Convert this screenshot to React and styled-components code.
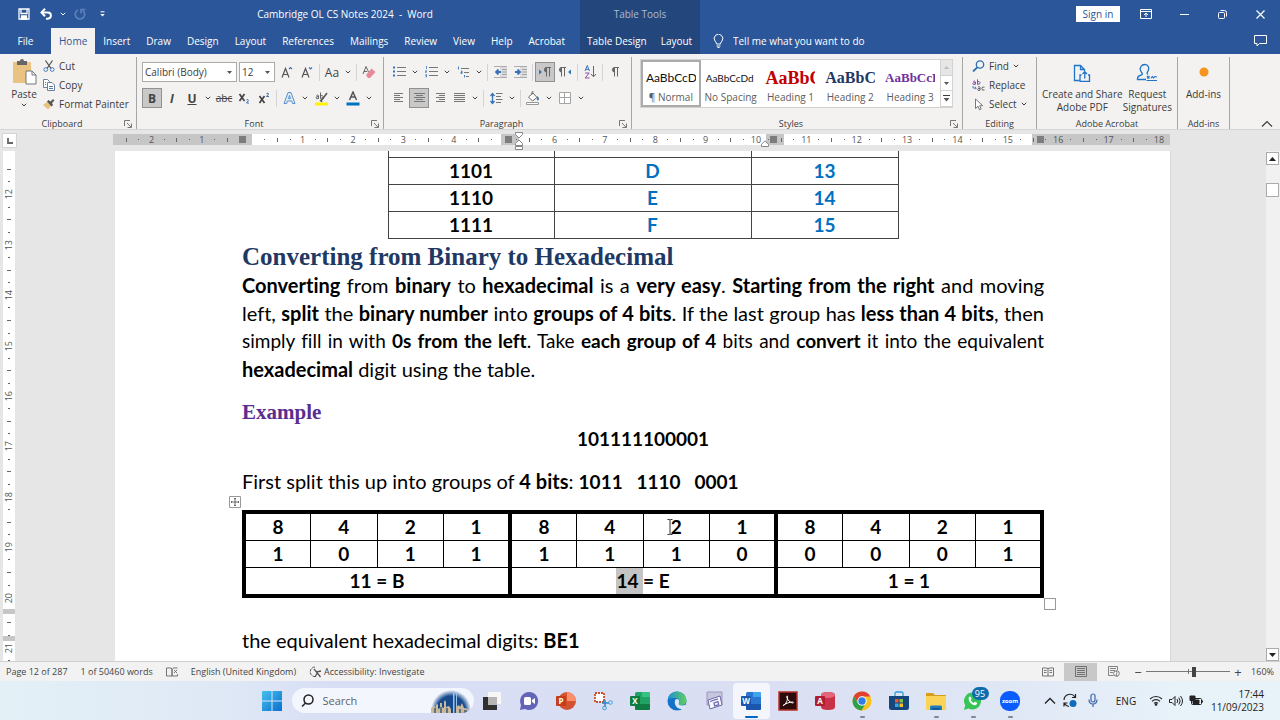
import React from "react";
import styled, { createGlobalStyle, css } from "styled-components";

const UI_FONT = `"Open Sans", "Noto Sans", sans-serif`;
const DOC_FONT = `Lato, "Open Sans", sans-serif`;
const SERIF_FONT = `"Liberation Serif", serif`;

const GlobalStyle = createGlobalStyle`
  * {
    box-sizing: border-box;
  }

  body {
    margin: 0;
    overflow: hidden;
    font-family: ${UI_FONT};
    font-size: 10px;
    color: #3b3b3b;
  }

  button, input, select {
    font: inherit;
    color: inherit;
    margin: 0;
    padding: 0;
    border: 0;
    background: none;
    outline: none;
  }

  svg {
    display: block;
    flex: none;
  }
`;

const Window = styled.div`
  display: flex;
  flex-direction: column;
  height: 100vh;
  background: #e6e6e6;
`;

/* ---------- Title bar and tabs ---------- */

const Header = styled.header`
  display: flex;
  height: 54px;
  background: #2b579a;
  color: #fff;
`;

const HeaderMain = styled.div`
  flex: 0 0 580px;
  min-width: 0;
`;

const HeaderContext = styled.div`
  flex: 0 0 120px;
  background: #23477d;
`;

const HeaderEnd = styled.div`
  flex: 1;
`;

const TitleRow = styled.div`
  display: flex;
  align-items: center;
  height: 28px;
`;

const TabRow = styled.nav`
  display: flex;
  height: 26px;
`;

const QuickAccess = styled.div`
  display: flex;
  align-items: center;
  gap: 6px;
  width: 110px;
  padding-left: 16px;
`;

const IconButton = styled.button`
  display: flex;
  align-items: center;
  justify-content: center;
  min-width: ${(p) => p.$w || 16}px;
  height: 20px;
`;

const DocTitle = styled.div`
  flex: 1;
  text-align: center;
  white-space: pre;
`;

const ContextTitle = styled.div`
  flex: 1;
  text-align: center;
  color: #a9bad6;
`;

const Tab = styled.button`
  height: 26px;
  padding: 0 ${(p) => p.$pad || 8}px;
  white-space: nowrap;
  ${(p) =>
    p.$active &&
    css`
      background: #f3f2f1;
      color: #2b579a;
    `}
`;

const FileTab = styled(Tab)`
  width: 51px;
`;

const WindowButtons = styled.div`
  display: flex;
  align-items: center;
  justify-content: flex-end;
  width: 100%;
  gap: 14px;
  padding-right: 8px;
`;

const SignIn = styled.button`
  width: 44px;
  height: 16px;
  background: #fff;
  color: #2b579a;
`;

const TellMe = styled.div`
  display: flex;
  flex: 1;
  align-items: center;
  gap: 9px;
  padding: 0 12px 0 13px;

  input {
    flex: 1;
    height: 20px;
  }

  input::placeholder {
    color: #fff;
    opacity: 1;
  }
`;

/* ---------- Ribbon ---------- */

const Ribbon = styled.div`
  display: flex;
  height: 76px;
  padding-top: 3px;
  background: #f3f2f1;
  border-bottom: 1px solid #d5d5d5;
`;

const Group = styled.section`
  display: flex;
  flex-direction: column;
  flex: 0 0 ${(p) => p.$w}px;
  min-width: 0;
  height: 72px;
  border-right: 1px solid #a6a6a6;
`;

const GroupBody = styled.div`
  display: flex;
  flex: 1;
  padding: 0 ${(p) => p.$pad || 5}px;
`;

const GroupFooter = styled.div`
  display: flex;
  align-items: center;
  height: 10px;
  font-size: 9px;
  line-height: 12px;

  span {
    flex: 1;
    text-align: center;
  }

  button {
    width: 12px;
  }
`;

const Rows = styled.div`
  display: flex;
  flex-direction: column;
  gap: 6px;
  padding-top: 5px;
`;

const ToolRow = styled.div`
  display: flex;
  align-items: center;
  height: 20px;
`;

const Tool = styled.button`
  display: flex;
  flex: none;
  align-items: center;
  justify-content: center;
  width: ${(p) => (p.$narrow ? 12 : 20)}px;
  height: 20px;
  border: 1px solid ${(p) => (p.$on ? "#919191" : "transparent")};
  background: ${(p) => (p.$on ? "#c8c8c8" : "none")};
  font-size: 12px;
  color: #444;
`;

const Divider = styled.span`
  flex: none;
  width: 1px;
  height: 17px;
  margin: 0 2px;
  background: #d4d4d4;
`;

const SelectBox = styled.div`
  position: relative;
  flex: none;
  width: ${(p) => p.$w}px;
  height: 20px;
  margin-right: 2px;
  border: 1px solid #ababab;
  background: #fff;

  select {
    width: 100%;
    height: 18px;
    padding-left: 2px;
    appearance: none;
  }

  svg {
    position: absolute;
    right: 4px;
    top: 8px;
    pointer-events: none;
  }
`;

const PasteButton = styled.button`
  display: flex;
  flex-direction: column;
  align-items: center;
  justify-content: flex-start;
  width: 38px;
  gap: 2px;
  padding-top: 2px;
`;

const SmallList = styled.div`
  display: flex;
  flex-direction: column;
  gap: 1px;
`;

const SmallButton = styled.button`
  display: flex;
  align-items: center;
  gap: 4px;
  height: 18px;
  white-space: nowrap;
`;

const BigButton = styled.button`
  display: flex;
  flex-direction: column;
  align-items: center;
  justify-content: flex-start;
  gap: 5px;
  flex: 1 1 auto;
  padding-top: 6px;
  line-height: 13px;
  white-space: pre;
`;

const Gallery = styled.div`
  display: flex;
  width: 313px;
  height: 49px;
  margin-top: 2px;
  border: 1px solid #d2d2d2;
  background: #fff;
`;

const StyleCard = styled.button`
  display: flex;
  flex-direction: column;
  align-items: center;
  justify-content: flex-end;
  flex: 1;
  min-width: 0;
  padding-bottom: 1px;
  overflow: hidden;
  border: 2px solid ${(p) => (p.$on ? "#ababab" : "transparent")};
  color: #5c5c5c;
`;

const Sample = styled.span`
  width: 50px;
  height: 21px;
  overflow: hidden;
  line-height: 18px;
  white-space: nowrap;
  text-align: left;
  font-family: ${(p) => (p.$serif ? SERIF_FONT : DOC_FONT)};
  font-weight: ${(p) => (p.$serif ? 700 : 400)};
  font-size: ${(p) => p.$size}px;
  color: ${(p) => p.$color};
`;

const GalleryNav = styled.div`
  display: flex;
  flex-direction: column;
  width: 12px;
  border-left: 1px solid #d2d2d2;

  button {
    display: flex;
    flex: 1;
    align-items: center;
    justify-content: center;
    border-bottom: 1px solid #d2d2d2;
  }

  button:first-child {
    background: #e6e6e6;
  }
`;

const CollapseArea = styled.div`
  display: flex;
  flex: 1;
  align-items: flex-end;
  justify-content: flex-end;
  padding: 0 7px 1px 0;
`;

/* ---------- Rulers ---------- */

const RulerRow = styled.div`
  display: flex;
  height: 21px;
  padding: 4px 110px 6px 0;
`;

const TabStop = styled.button`
  width: 15px;
  height: 15px;
  margin: -1px 96px 0 2px;
  border: 1px solid #d5d5d5;
  background: #fff;
  display: flex;
  align-items: center;
  justify-content: center;
`;

const Ruler = styled.div`
  position: relative;
  flex: 1;
  height: 11px;
  background: linear-gradient(
    to right,
    #c6c6c6 139px,
    #fff 139px 388px,
    #c6c6c6 388px 406px,
    #fff 406px 653px,
    #c6c6c6 653px 671px,
    #fff 671px 919px,
    #c6c6c6 919px
  );
`;

const Scale = styled.div`
  display: flex;
  height: 11px;
  margin: 0 -8px 0 7px;
  font-size: 9px;
  line-height: 11px;
  color: #555;
`;

const ScaleClip = styled.div`
  overflow: hidden;
`;

const Unit = styled.div`
  display: grid;
  flex: 1;
  grid-template-columns: repeat(4, minmax(0, 1fr));
  align-items: center;
  justify-items: center;
`;

const Tick = styled.i`
  width: 1px;
  height: ${(p) => (p.$long ? 4 : 1)}px;
  background: #666;
`;

const Marker = styled.span`
  position: absolute;
  left: ${(p) => p.$x}px;
  top: 2px;
  width: 7px;
  height: 7px;
  background: #7d7d7d;
`;

const Indent = styled.svg`
  position: absolute;
  left: ${(p) => p.$x}px;
  top: ${(p) => p.$y}px;
`;

const Workspace = styled.main`
  display: flex;
  flex: 1;
  min-height: 0;
`;

const SideRuler = styled.div`
  position: relative;
  display: flex;
  width: 12px;
  margin-left: 3px;
  overflow: hidden;
  background: #fff;
`;

const SideScale = styled.div`
  display: flex;
  flex: 1;
  flex-direction: column;
  margin: 12px 0 -6px;
  font-size: 9px;
  line-height: 12px;
  color: #555;
`;

const SideUnit = styled.div`
  display: grid;
  flex: 1;
  grid-template-rows: repeat(4, minmax(0, 1fr));
  align-items: center;
  justify-items: center;

  span {
    writing-mode: vertical-rl;
    transform: rotate(180deg);
  }
`;

const SideTick = styled.i`
  width: ${(p) => (p.$long ? 4 : 2)}px;
  height: 1px;
  background: #666;
`;

const RowMark = styled.span`
  position: absolute;
  left: 0;
  top: ${(p) => p.$y}px;
  width: 12px;
  height: 5px;
  background: #c6c6c6;
`;

/* ---------- Page ---------- */

const Page = styled.article`
  flex: 1;
  margin: 0 95px 0 100px;
  padding: 0 126px 0 127px;
  overflow: hidden;
  background: #fff;
  border-right: 1px solid #d8d8d8;
  font-family: ${DOC_FONT};
  font-size: 20px;
  font-variant-ligatures: none;
  line-height: 28px;
  color: #000;
`;

const HexTable = styled.table`
  width: 510px;
  margin: 0 auto;
  border-collapse: collapse;
  table-layout: fixed;
  font-size: 19px;
  font-weight: 700;
  text-align: center;
  line-height: 26px;

  td {
    height: 27px;
    padding: 0;
    border: 1px solid #444;
  }

  td + td {
    color: #0070c0;
  }

  tr:first-child td {
    height: 6px;
    border-top: 0;
  }
`;

const SectionTitle = styled.h2`
  margin: 3px 0 0;
  font-family: ${SERIF_FONT};
  font-size: 25px;
  line-height: 29px;
  color: #1f3864;
`;

const Line = styled.div`
  font-size: ${(p) => (p.$tight ? 19 : 20)}px;
  white-space: nowrap;
  text-align-last: ${(p) => (p.$last ? "left" : "justify")};
`;

const ExampleTitle = styled.h3`
  margin: 15px 0 0;
  font-family: ${SERIF_FONT};
  font-size: 21px;
  line-height: 28px;
  color: #5b2d90;
`;

const BitString = styled.p`
  margin: 0;
  font-size: 19px;
  font-weight: 700;
  text-align: center;
  line-height: 26px;
`;

const Paragraph = styled.p`
  margin: ${(p) => p.$top}px 0 0;
  white-space: pre;
`;

const Bits = styled.b`
  font-size: 19px;
`;

const TableFrame = styled.div`
  position: relative;
  margin-top: 14px;
`;

const BitTable = styled.table`
  width: 100%;
  border-collapse: collapse;
  table-layout: fixed;
  border: 4px solid #000;
  font-size: 19px;
  font-weight: 700;
  text-align: center;
  line-height: 26px;

  td {
    height: 27px;
    padding: 0;
    border: 1px solid #000;
  }

  td.edge {
    border-right: 4px solid #000;
  }
`;

const Picked = styled.span`
  display: inline-block;
  background: #c4c4c4;
  white-space: pre;
`;

const MoveHandle = styled.svg`
  position: absolute;
  left: -13px;
  top: -14px;
`;

const ResizeHandle = styled.span`
  position: absolute;
  right: -12px;
  bottom: -12px;
  width: 12px;
  height: 12px;
  border: 1px solid #999;
  background: #fff;
`;

const Caret = styled.svg`
  position: absolute;
  left: 53%;
  top: 9px;
`;

const ScrollBar = styled.div`
  display: flex;
  flex-direction: column;
  width: 14px;
  padding: 1px 1px 0 0;
  background: #f1f1f1;
`;

const ScrollButton = styled.button`
  display: flex;
  align-items: center;
  justify-content: center;
  height: 13px;
  border: 1px solid #ababab;
  background: #fff;
`;

const ScrollThumb = styled.div`
  height: 14px;
  margin: 18px 0 auto;
  border: 1px solid #ababab;
  background: #fff;
`;

/* ---------- Status bar ---------- */

const StatusBar = styled.footer`
  display: flex;
  align-items: center;
  height: 20px;
  padding: 0 6px;
  background: #f2f2f2;
  border-top: 1px solid #cfcfcf;
  font-size: 9px;
  color: #444;
`;

const StatusItem = styled.button`
  display: flex;
  align-items: center;
  gap: 2px;
  margin-right: 13px;
  white-space: nowrap;
`;

const Views = styled.div`
  display: flex;
  margin-left: auto;
`;

const ViewButton = styled.button`
  display: flex;
  align-items: center;
  justify-content: center;
  width: 33px;
  height: 18px;
  background: ${(p) => (p.$on ? "#c8c8c8" : "none")};
`;

const Zoom = styled.input`
  width: 84px;
  height: 12px;
  appearance: none;
  background: linear-gradient(#777, #777) center / 100% 1px no-repeat,
    linear-gradient(#777, #777) center / 1px 5px no-repeat;

  &::-webkit-slider-thumb {
    appearance: none;
    width: 4px;
    height: 10px;
    background: #444;
  }
`;

const ZoomStep = styled.button`
  width: 16px;
  font-size: 13px;
  line-height: 12px;
`;

const ZoomValue = styled.button`
  width: 28px;
  text-align: right;
`;

/* ---------- Taskbar ---------- */

const Taskbar = styled.div`
  display: flex;
  align-items: center;
  height: 39px;
  padding-right: 16px;
  background: linear-gradient(
    to right,
    #e3f0f6 0%,
    #dfe9f6 17%,
    #d8def4 26%,
    #dadff3 60%,
    #dfe7f5 78%,
    #e8f2f9 92%
  );
`;

const Apps = styled.div`
  display: flex;
  flex: none;
  align-items: center;
  margin: 0 auto;
  padding-left: 240px;
`;

const AppButton = styled.button`
  position: relative;
  display: flex;
  align-items: center;
  justify-content: center;
  width: ${(p) => p.$w || 37}px;
  height: 36px;
  border-radius: 4px;
  background: ${(p) => (p.$active ? "rgba(255,255,255,.7)" : "none")};
`;

const Running = styled.i`
  position: absolute;
  bottom: 1px;
  left: 50%;
  width: ${(p) => (p.$active ? 13 : 5)}px;
  height: 2px;
  margin-left: ${(p) => (p.$active ? -6 : -2)}px;
  border-radius: 1px;
  background: ${(p) => (p.$active ? "#0067c0" : "#7f8792")};
`;

const Badge = styled.span`
  position: absolute;
  top: 4px;
  right: 3px;
  width: 17px;
  border-radius: 8px;
  background: #0f6cad;
  color: #fff;
  font-size: 9px;
  line-height: 13px;
  text-align: center;
`;

const SearchBox = styled.div`
  display: flex;
  align-items: center;
  width: 182px;
  height: 25px;
  padding: 0 3px 0 9px;
  gap: 9px;
  overflow: hidden;
  border-radius: 13px;
  background: #f3f6fc;
  font-size: 11px;

  input {
    flex: 1;
    min-width: 0;
  }

  input::placeholder {
    color: #5f6368;
    opacity: 1;
  }
`;

const Tray = styled.div`
  display: flex;
  flex: none;
  align-items: center;
  color: #222;
`;

const TrayButton = styled.button`
  display: flex;
  align-items: center;
  justify-content: center;
  width: ${(p) => p.$w || 20}px;
  height: 24px;
`;

const Clock = styled.button`
  width: 58px;
  line-height: 13px;
  text-align: right;
`;

/* ---------- Icons ---------- */

const Svg = ({ w = 16, h = 16, children, ...rest }) => (
  <svg
    width={w}
    height={h}
    viewBox={`0 0 ${w} ${h}`}
    fill="none"
    stroke="currentColor"
    {...rest}
  >
    {children}
  </svg>
);

const Chevron = () => (
  <Svg w={6} h={4}>
    <path d="M.8.8 3 3 5.2.8" />
  </Svg>
);

const DownArrow = () => (
  <Svg w={5} h={3} stroke="none">
    <path d="M0 0h5L2.500 3z" fill="#555" />
  </Svg>
);

const Launcher = () => (
  <Svg w={8} h={8} stroke="#777">
    <path d="M.5 6V.5H6M3 3l4 4M7.500 3.500v4h-4" />
  </Svg>
);

const SaveIcon = () => (
  <Svg w={12} h={12} strokeWidth="1.3">
    <path d="M1 1h10v10H1zM3 1v4.500h6V1" />
    <path d="M3.500 11V8h5v3z" fill="#fff" />
  </Svg>
);

const UndoIcon = () => (
  <Svg w={13} h={12} strokeWidth="2">
    <path d="M1.500 4.500h6.300a3.100 3.100 0 0 1 0 6.200H6" />
    <path d="M5 .8 1.500 4.500 5 8.200" />
  </Svg>
);

const RedoIcon = () => (
  <Svg w={12} h={12} stroke="#5c80b8" strokeWidth="1.700">
    <path d="M4 2a4.700 4.700 0 1 0 4.600.4" />
    <path d="M7 5.500V1.500h4.500" />
  </Svg>
);

const CustomizeIcon = () => (
  <Svg w={5} h={6}>
    <path d="M.5.8h4" />
    <path d="M.3 3h4.400L2.500 5.500z" fill="#fff" stroke="none" />
  </Svg>
);

const PasteIcon = () => (
  <Svg w={26} h={26} stroke="none">
    <rect x="2" y="3" width="18" height="21" rx="1" fill="#eac282" />
    <path d="M6 2h3a2 2 0 0 1 4 0h3v4H6z" fill="#666" />
    <path d="M15 12h6l4 4v9H15z" fill="#fff" stroke="#777" />
    <path d="M21 12v4h4" stroke="#777" />
  </Svg>
);

const CutIcon = () => (
  <Svg w={12} h={12}>
    <path d="m2.500.5 5.500 8M9.500.5 4 8.500" stroke="#555" strokeWidth="1.300" />
    <circle cx="2.800" cy="9.500" r="1.900" stroke="#4a7ebb" />
    <circle cx="9.200" cy="9.500" r="1.900" stroke="#4a7ebb" />
  </Svg>
);

const CopyIcon = () => (
  <Svg w={12} h={12} stroke="#6b7f99">
    <path d="M.5.5h4l2 2v6h-6z" fill="#fff" />
    <path d="M4.500 3.500h4.500l2.500 2.500v5.500h-7z" fill="#fff" />
    <path d="M6 7.500h4M6 9.500h4M2 3.500h1M2 5.500h1" stroke="#4a7ebb" />
  </Svg>
);

const BrushIcon = () => (
  <Svg w={12} h={12} stroke="none">
    <path d="M0 7 4.500 3.500l4 4L5 11.500z" fill="#eac282" />
    <path d="m4 3.500 1.500-1.500 2 1.500L10 1l1.500 1.500L9 5l1 2-1.500 1.500z" fill="#555" />
  </Svg>
);

const GrowFont = ({ down }) => (
  <Svg w={14} h={14} stroke="#555" strokeWidth="1.200">
    <path d="m2 12.500 3.500-9 3.500 9M3.300 9.500h4.400" />
    <path d={down ? "m9 2.500 1.500 1.500L12 2.500" : "M9 4l1.500-1.500L12 4"} stroke="#3873b8" />
  </Svg>
);

const EraserIcon = () => (
  <Svg w={14} h={14}>
    <path d="m1 9 3-7.500L6.500 7M2 6.500h3" stroke="#666" />
    <path d="m4 10 5.500-6.500L13.500 7 8 13H6z" fill="#e8899a" stroke="none" />
  </Svg>
);

const OutlineA = () => (
  <Svg w={13} h={14} stroke="#5a92cf">
    <path d="M1 12.500 5 1.500h3l4 11H9.500l-.8-2.500H4.500l-.8 2.500z" fill="#dbe9f7" />
    <path d="m5.500 7.500 1-3 1 3z" fill="#fff" />
  </Svg>
);

const HighlightIcon = () => (
  <Svg w={15} h={15} stroke="#555">
    <path d="m7 10 6-8M6 9l2 2" strokeWidth="1.500" />
    <path d="M2.500 4.500q1.500-1 2 0v3q-2.500.8-2.500-.8t2.500-1M6.500 1.500v6M6.500 5q2-1.500 2.500.5t-2.500 2" strokeWidth=".9" />
    <path d="M1 11.500h13v3H1z" fill="#fff100" stroke="none" />
  </Svg>
);

const FontColorIcon = () => (
  <Svg w={14} h={15} stroke="#555" strokeWidth="1.500">
    <path d="m3.500 9 3.500-8 3.500 8M4.800 6h4.400" />
    <path d="M.5 11.500h13v3H.5z" fill="#0070c0" stroke="none" />
  </Svg>
);

const ListIcon = ({ kind }) => (
  <Svg w={13} h={12} stroke="#777">
    <path d={kind === "multi" ? "M4 2.500h8M7 6.500h5M9 10.500h3" : "M4 1.500h9M4 5.500h9M4 9.500h9"} />
    {kind === "bullet" && (
      <path d="M0 1.500h2M0 5.500h2M0 9.500h2" stroke="#3873b8" strokeWidth="2" />
    )}
    {kind === "number" && (
      <path d="M1.500 0v3M.5 4.500h1v1h-1v1h1M.5 8.500h1v2.500h-1M.5 9.500h1" stroke="#3873b8" strokeWidth=".8" />
    )}
    {kind === "multi" && (
      <path d="M1.500.5v3M4 5h1v2.500H4V6h1M7.500 9v2.500" stroke="#3873b8" strokeWidth=".9" />
    )}
  </Svg>
);

const IndentIcon = ({ out }) => (
  <Svg w={13} h={12} stroke="#999">
    <path d="M6 .5h7v11H6z" fill="#dcdcdc" stroke="none" />
    <path d="M0 .5h13M8 3.500h5M8 6h5M8 8.500h5M0 11.500h13" strokeWidth=".8" />
    <path d={out ? "M7 6H2m2.500-2.500L2 6l2.500 2.500" : "M1 6h5M3.500 3.500 6 6 3.500 8.500"} stroke="#3873b8" strokeWidth="1.800" />
  </Svg>
);

const PilcrowIcon = ({ arrow }) => (
  <Svg w={14} h={12} stroke="#666">
    {arrow === "right" && <path d="M1 3.500v5l3-2.500z" fill="#3873b8" stroke="none" />}
    {arrow === "left" && <path d="M13 3.500v5l-3-2.500z" fill="#3873b8" stroke="none" />}
    <g transform={arrow === "right" ? "translate(2 0)" : arrow ? "translate(-3 0)" : "translate(0 0)"}>
      <path d="M6.500 10.500v-9M9.500 10.500v-9M11 1.500H6" />
      <path d="M6.500 1.500a2 2.200 0 0 0 0 4.500z" fill="#666" />
    </g>
  </Svg>
);

const SortIcon = () => (
  <Svg w={13} h={14}>
    <path d="m1 6 2.300-5.500L5.500 6M1.800 4.300h3" stroke="#3873b8" />
    <path d="M1.200 8h4L1.200 13h4.300" stroke="#8a4fa3" />
    <path d="M9.500 1v10.500M7 9l2.500 2.800L12 9" stroke="#666" />
  </Svg>
);

const alignPaths = {
  left: "M0 .5h9M0 2.500h6M0 4.500h9M0 6.500h6M0 8.500h9",
  center: "M0 .5h11M2 2.500h7M0 4.500h11M2 6.500h7M0 8.500h11",
  right: "M2 .5h9M5 2.500h6M2 4.500h9M5 6.500h6M2 8.500h9",
  justify: "M0 .5h11M0 2.500h11M0 4.500h11M0 6.500h11M0 8.500h11",
};

const AlignIcon = ({ kind }) => (
  <Svg w={11} h={10} stroke="#777">
    <path d={alignPaths[kind]} />
  </Svg>
);

const SpacingIcon = () => (
  <Svg w={13} h={13}>
    <path d="M2.500 2v9M.5 4l2-2.500 2 2.500M.5 9l2 2.500 2-2.500" stroke="#3873b8" strokeWidth="1.300" />
    <path d="M6 1.500h6.500M6 4.500h5M6 7.500h6.500M6 10.500h5" stroke="#777" />
  </Svg>
);

const ShadingIcon = () => (
  <Svg w={14} h={14} stroke="#666">
    <path d="m2.500 6 4.500-4 4 4.500-4.500 3.500z" fill="#fff" />
    <path d="M6 3.500V.8h1.500" />
    <path d="M11.500 5q2.500 3 .8 4.200T11 6z" fill="#3873b8" stroke="none" />
    <path d="M.5 11.500h12v2H.5z" fill="#fff" stroke="#999" />
  </Svg>
);

const BordersIcon = () => (
  <Svg w={12} h={12} stroke="#a5a5a5">
    <path d="M.5.5h11v11H.5zM5.500.5v11M.5 5.500h11" fill="#fff" />
  </Svg>
);

const FindIcon = () => (
  <Svg w={13} h={12} stroke="#2f6fad" strokeWidth="1.300">
    <circle cx="8" cy="4.500" r="3.700" />
    <path d="M5.300 7.300 1 11.500" strokeWidth="1.800" />
  </Svg>
);

const ReplaceIcon = () => (
  <Svg w={13} h={12} strokeWidth=".9">
    <path d="M1.200 2.500q1.800-1 2.200.3v2.500q-2.600.8-2.600-.6t2.600-1M5.500.3v5.200M5.500 3q2-1.300 2.500.5t-2.500 2" stroke="#7a3f98" />
    <path d="M1 7v2h3M3 7.800 4.300 9 3 10.300" stroke="#3873b8" />
    <path d="M6 8q1.800-.8 2 .3v3q-2.400.6-2.400-.8T8 9.500M12.500 8.200q-2.700-.8-2.700 1.400t2.700 1.400" stroke="#555" />
  </Svg>
);

const SelectIcon = () => (
  <Svg w={13} h={13} stroke="#777">
    <path d="M3.500 1v9.500L6 8.300l1.500 3.500 1.700-.8L7.700 7.700h3z" fill="#fff" />
  </Svg>
);

const PdfIcon = () => (
  <Svg w={18} h={20} stroke="#1f74c9" strokeWidth="1.300">
    <path d="M6.500 17.500h-5v-15h6l4 4V8M7.500 2.500v4h4" />
    <path d="M8.500 12H7v6.300h9.500V12H15M11.800 15.500V9M9.500 11l2.300-2.300L14 11" />
  </Svg>
);

const SignatureIcon = () => (
  <Svg w={22} h={20} stroke="#1f74c9" strokeWidth="1.300">
    <path d="M10 16.500H1.500q-.5-3.500 4-4.500 1.500-.6.500-2-3-3.500-1-6.500T11 2q3 2.500.8 6.500-1.500 2 .2 3" />
    <path d="M10.500 17.500H21M11 13l2.500 2.500M13.500 13 11 15.500M15 15l1.500-1.500 1 1.500 1.500-1.500 2 .5" strokeWidth="1.100" />
  </Svg>
);

const StatusBook = () => (
  <Svg w={12} h={10} stroke="#666">
    <path d="M6 1.500Q4 .5.500 1v8h5.500zM6 1.500V9M6 9h5.500V7M7 1h4.500M8 3l3 3M11 3 8 6" strokeWidth=".9" />
  </Svg>
);

const AccessIcon = () => (
  <Svg w={13} h={12} stroke="#555">
    <path d="M6 1a4.800 4.800 0 1 0 1 9.500" strokeDasharray="3 1" />
    <path d="m5 3 2.500 3L12 5M7.500 6l4 5M8.500 6.500 6 11" strokeWidth="1.300" />
  </Svg>
);

const ReadView = () => (
  <Svg w={12} h={10} stroke="#666">
    <path d="M6 1.500Q3 .5.500 1v8h11V1Q9 .5 6 1.500zV9M2 3.500h2.500M2 5.500h2.500M7.500 3.500H10M7.500 5.500H10" strokeWidth=".9" />
  </Svg>
);

const PrintView = () => (
  <Svg w={12} h={11} stroke="#666">
    <path d="M.5.5h11v10H.5zM2 2.500h8M2 4.500h8M2 6.500h8M2 8.500h8" strokeWidth=".9" />
  </Svg>
);

const WebView = () => (
  <Svg w={12} h={11} stroke="#777">
    <path d="M5.500 9.500h-5v-9h9V4M2 2.500h6M2 4.500h5M2 6.500h3" strokeWidth=".9" />
    <circle cx="8.500" cy="7.500" r="2.800" fill="#fff" />
    <path d="M8 5q2 2 .5 3t1 2" />
  </Svg>
);

/* App icons on the taskbar */

const WindowsLogo = () => (
  <Svg w={20} h={20} stroke="none">
    <defs>
      <linearGradient id="win" x1="0" y1="0" x2="1" y2="1">
        <stop offset="0" stopColor="#44c1ee" />
        <stop offset="1" stopColor="#0a6fcf" />
      </linearGradient>
    </defs>
    <path d="M0 0h9.500v9.500H0zM10.500 0H20v9.500h-9.500zM0 10.500h9.500V20H0zM10.500 10.500H20V20h-9.500z" fill="url(#win)" />
  </Svg>
);

const Skyline = () => (
  <Svg w={42} h={25} stroke="none">
    <defs>
      <radialGradient id="sky">
        <stop offset=".7" stopColor="#174a8c" />
        <stop offset="1" stopColor="#174a8c" stopOpacity="0" />
      </radialGradient>
    </defs>
    <ellipse cx="22" cy="22" rx="20" ry="20" fill="url(#sky)" />
    <path d="M24 3h1.500v22H24zM27 4h1v21h-1z" fill="#9cc4ea" />
    <path d="M2 25v-5l3-2 2 2v-3l2-1v5l2-1v-5h2v4l2 1v-6l1-2 1 2v5l3-1 2 3v4zM27 25v-6l3-2 1 2 2-4 2 5 4 1v4z" fill="#c9b99c" />
    <path d="M5 25v-5h2v5zM11 25v-6h2v6zM17 25v-5h2v5zM30 25v-4h2v4zM35 25v-3h3v3z" fill="#64707c" />
  </Svg>
);

const TaskViewIcon = () => (
  <Svg w={20} h={20} stroke="none">
    <path d="M6 1h13v12H6z" fill="#f7f7f7" />
    <path d="M1 6h14v13H1z" fill="#303030" />
    <path d="M6 6h9v8H6z" fill="#b5b5b5" />
  </Svg>
);

const ChatIcon = () => (
  <Svg w={20} h={20} stroke="none">
    <path d="M10 1a9 9 0 1 1-4 17L1 19l1-5A9 9 0 0 1 10 1z" fill="#6264b8" />
    <rect x="5" y="6" width="7" height="8" rx="1.500" fill="#fff" />
    <path d="m13 9 3-2v6l-3-2z" fill="#fff" />
  </Svg>
);

const LetterMark = styled.text`
  font-family: ${UI_FONT};
  font-size: 8px;
  font-weight: 700;
  fill: #fff;
  text-anchor: middle;
`;

const OfficeIcon = ({ letter, dark, mid, light, round }) => (
  <Svg w={20} h={20} stroke="none">
    {round ? (
      <>
        <circle cx="11" cy="10" r="9" fill={mid} />
        <path d="M11 1a9 9 0 0 1 9 9h-9z" fill={light} />
      </>
    ) : (
      <>
        <rect x="5" y="1" width="15" height="18" rx="1.500" fill={mid} />
        <path d="M12 1h6.500A1.500 1.500 0 0 1 20 2.500V6h-8z" fill={light} />
        <path d="M5 13h15v4.500a1.500 1.500 0 0 1-1.500 1.500h-12A1.500 1.500 0 0 1 5 17.500z" fill={dark} />
      </>
    )}
    <rect x="0" y="5" width="10" height="10" rx="1" fill={dark} />
    <LetterMark x="5" y="13">
      {letter}
    </LetterMark>
  </Svg>
);

const AccessAppIcon = () => (
  <Svg w={20} h={20} stroke="none">
    <path d="M6 4q0-3 7-3t7 3v12q0 3-7 3t-7-3z" fill="#c93148" />
    <ellipse cx="13" cy="4" rx="7" ry="3" fill="#e2677a" />
    <rect x="0" y="5" width="10" height="10" rx="1" fill="#b01c32" />
    <LetterMark x="5" y="13">
      A
    </LetterMark>
  </Svg>
);

const SnipIcon = () => (
  <Svg w={20} h={20}>
    <path d="M2 2h9v9H2z" stroke="#c94f2c" strokeWidth="1.800" strokeDasharray="2 1" fill="#fff" />
    <path d="M12 9v7M9 12h7" stroke="#2a86c8" strokeWidth="1.500" />
    <circle cx="11.500" cy="17" r="1.800" stroke="#3aa0dc" />
    <circle cx="17.500" cy="11.500" r="1.800" stroke="#3aa0dc" />
  </Svg>
);

const EdgeIcon = () => (
  <Svg w={20} h={20} stroke="none">
    <defs>
      <linearGradient id="edgeTop" x1="0" y1="0" x2="1" y2="0">
        <stop offset="0" stopColor="#1b90d8" />
        <stop offset="1" stopColor="#62d05b" />
      </linearGradient>
    </defs>
    <circle cx="10" cy="10" r="9.500" fill="#1473c8" />
    <path d="M.6 9A9.500 9.500 0 0 1 19.500 9c.3 4-3 5.500-6.500 5-1.500-.3-1.500-1-1-2 1.500-3-1-5-4-5-4 0-7 1-7.400 2z" fill="url(#edgeTop)" />
    <path d="M8.500 8.500c2-1.500 4.500.5 3.500 3-.7 1.800 0 2.500 1.500 2.800 2 .4 3.800 0 5-.8l.3 1.500q-1 2-2.500 3C10 19 6 13 8.500 8.500z" fill="#dce9f8" />
  </Svg>
);

const NewsIcon = () => (
  <Svg w={19} h={19}>
    <path d="M2 1h15v13H2z" fill="#c8c6df" stroke="#9a97bd" />
    <path d="m3 9 12-4 2 9-12 4z" fill="#f7f7ff" stroke="#6c69a8" />
    <path d="m5 10.500 8-2.700M9 12l4-1.300.7 3-4 1.300z" stroke="#6c69a8" strokeWidth="1.300" />
  </Svg>
);

const AcrobatIcon = () => (
  <Svg w={20} h={20}>
    <rect x="1" y="1" width="18" height="18" fill="#2b0b0b" stroke="#b5302a" strokeWidth="1.500" />
    <path d="M5 14.500c3-1 5-6 4.500-9-.2-1-1-.8-.8.3.5 3 3.500 6 6 6.200 1 0 1-1 0-1-3 0-7 1.500-9.500 3.500z" stroke="#fff" />
  </Svg>
);

const ChromeIcon = () => (
  <Svg w={20} h={20} stroke="none">
    <circle cx="10" cy="10" r="9.500" fill="#f9c31f" />
    <path d="M1.800 5.200A9.500 9.500 0 0 1 18.300 5.500H10L6 12z" fill="#df4030" />
    <path d="M1.800 5.200A9.500 9.500 0 0 0 9.500 19.500l4.200-7.200H6z" fill="#2ea04b" />
    <circle cx="10" cy="10" r="4.700" fill="#fff" />
    <circle cx="10" cy="10" r="3.700" fill="#2f7de9" />
  </Svg>
);

const StoreIcon = () => (
  <Svg w={20} h={20} stroke="none">
    <path d="M6 5V2.500Q6 1 7.500 1h5Q14 1 14 2.500V5" stroke="#2c9fd8" strokeWidth="1.300" />
    <path d="M0 5h20v11.500a2.500 2.500 0 0 1-2.500 2.500h-15A2.500 2.500 0 0 1 0 16.500z" fill="#16477c" />
    <path d="M6 8h3.500v3.500H6z" fill="#ee5b31" />
    <path d="M10.500 8H14v3.500h-3.500z" fill="#7fc241" />
    <path d="M6 12.500h3.500V16H6z" fill="#38a9e0" />
    <path d="M10.500 12.500H14V16h-3.500z" fill="#fbc31c" />
  </Svg>
);

const FolderIcon = () => (
  <Svg w={20} h={20} stroke="none">
    <path d="M0 2h7l2 2h11v5H0z" fill="#d89d1d" />
    <path d="M0 5h20v14H0z" fill="#fbd357" />
    <path d="M4 19v-3q0-1.500 1.500-1.500h9Q16 14.500 16 16v3z" fill="#2079bd" />
    <path d="M6 17h8v2H6z" fill="#125a94" />
  </Svg>
);

const WhatsAppIcon = () => (
  <Svg w={20} h={20} stroke="none">
    <path d="M9.500 1.500a8.500 8.500 0 1 1-4 16L.8 19l1.500-4.500a8.500 8.500 0 0 1 7.200-13z" fill="#35c557" />
    <path d="M6 6q1-1 1.800.2l.7 1.600-.9 1.200q1 2 3 2.900l1.200-1.200 2.200 1q.7 1-1 2.300c-3 1.500-9-4-7-8z" fill="#fff" />
  </Svg>
);

const ZoomText = styled.text`
  font-family: ${UI_FONT};
  font-size: 6px;
  font-weight: 700;
  fill: #fff;
  text-anchor: middle;
`;

const ZoomIcon = () => (
  <Svg w={20} h={20} stroke="none">
    <rect width="20" height="20" rx="9" fill="#0b5cff" />
    <ZoomText x="10" y="12">
      zoom
    </ZoomText>
  </Svg>
);

const WordIcon = () => <OfficeIcon letter="W" dark="#1a56ae" mid="#2a76d0" light="#41a5ee" />;

const apps = [
  { name: "Task View", icon: <TaskViewIcon /> },
  { name: "Chat", icon: <ChatIcon /> },
  { name: "PowerPoint", icon: <OfficeIcon round letter="P" dark="#c43e1c" mid="#d35230" light="#ff8f6b" /> },
  { name: "Snipping Tool", icon: <SnipIcon /> },
  { name: "Excel", icon: <OfficeIcon letter="X" dark="#107c41" mid="#21a366" light="#33c481" /> },
  { name: "Edge", icon: <EdgeIcon /> },
  { name: "News", icon: <NewsIcon /> },
  { name: "Word", icon: <WordIcon />, active: true },
  { name: "Acrobat", icon: <AcrobatIcon /> },
  { name: "Access", icon: <AccessAppIcon /> },
  { name: "Chrome", icon: <ChromeIcon />, running: true },
  { name: "Store", icon: <StoreIcon /> },
  { name: "File Explorer", icon: <FolderIcon />, running: true },
  { name: "WhatsApp", icon: <WhatsAppIcon />, running: true, badge: "95" },
  { name: "Zoom", icon: <ZoomIcon />, running: true },
];

const tabs = [
  "Insert",
  "Draw",
  "Design",
  "Layout",
  "References",
  "Mailings",
  "Review",
  "View",
  "Help",
  "Acrobat",
];

const styleCards = [
  { name: "¶ Normal", sample: "AaBbCcD", size: 12, color: "#111", on: true },
  { name: "No Spacing", sample: "AaBbCcDd", size: 10, color: "#111" },
  { name: "Heading 1", sample: "AaBbC", size: 18, color: "#c00000", serif: true },
  { name: "Heading 2", sample: "AaBbC", size: 16, color: "#1f3864", serif: true },
  { name: "Heading 3", sample: "AaBbCcD", size: 13, color: "#7030a0", serif: true },
];

const rulerUnits = Array.from({ length: 21 }, (_, i) => i - 2);
const sideUnits = Array.from({ length: 10 }, (_, i) => i + 12);

const hexRows = [
  ["1101", "D", "13"],
  ["1110", "E", "14"],
  ["1111", "F", "15"],
];

const weights = ["8", "4", "2", "1", "8", "4", "2", "1", "8", "4", "2", "1"];
const bits = ["1", "0", "1", "1", "1", "1", "1", "0", "0", "0", "0", "1"];

const TitleArea = () => (
  <Header>
    <HeaderMain>
      <TitleRow>
        <QuickAccess>
          <IconButton aria-label="Save"><SaveIcon /></IconButton>
          <IconButton aria-label="Undo"><UndoIcon /></IconButton>
          <IconButton $w={6} aria-label="Undo list"><Chevron /></IconButton>
          <IconButton aria-label="Redo"><RedoIcon /></IconButton>
          <IconButton aria-label="Customize toolbar"><CustomizeIcon /></IconButton>
        </QuickAccess>
        <DocTitle>Cambridge OL CS Notes 2024  -  Word</DocTitle>
      </TitleRow>
      <TabRow>
        <FileTab>File</FileTab>
        <Tab $active>Home</Tab>
        {tabs.map((tab) => (
          <Tab key={tab}>{tab}</Tab>
        ))}
      </TabRow>
    </HeaderMain>
    <HeaderContext>
      <TitleRow>
        <ContextTitle>Table Tools</ContextTitle>
      </TitleRow>
      <TabRow>
        <Tab $pad={7}>Table Design</Tab>
        <Tab $pad={7}>Layout</Tab>
      </TabRow>
    </HeaderContext>
    <HeaderEnd>
      <TitleRow>
        <WindowButtons>
          <SignIn>Sign in</SignIn>
          <IconButton $w={24} aria-label="Ribbon options">
            <Svg w={12} h={10}>
              <path d="M.5.5h11v9H.5zM.5 2.500h11M6 8V4.500M4 6l2-2 2 2" />
            </Svg>
          </IconButton>
          <IconButton $w={24} aria-label="Minimize">
            <Svg w={9} h={9}><path d="M0 4.500h9" /></Svg>
          </IconButton>
          <IconButton $w={24} aria-label="Restore">
            <Svg w={9} h={9}>
              <path d="M.5 3.500Q.5 2.500 1.500 2.500h4q1 0 1 1v4q0 1-1 1h-4q-1 0-1-1zM2.500.5h4q2 0 2 2v4" />
            </Svg>
          </IconButton>
          <IconButton $w={24} aria-label="Close">
            <Svg w={9} h={9}><path d="m.5.5 8 8M8.500.5l-8 8" strokeWidth="1.200" /></Svg>
          </IconButton>
        </WindowButtons>
      </TitleRow>
      <TabRow as="div">
        <TellMe>
          <Svg w={11} h={14}>
            <path d="M3.500 10Q3.500 8.500 2 7a4.300 4.300 0 1 1 7 0Q7.500 8.500 7.500 10zM3.500 12h4M4.500 13.500h2" />
          </Svg>
          <input aria-label="Tell me" placeholder="Tell me what you want to do" />
          <IconButton aria-label="Comments">
            <Svg w={13} h={12}><path d="M.5.500h12v8h-7l-2.500 2.500V8.500H.5z" /></Svg>
          </IconButton>
        </TellMe>
      </TabRow>
    </HeaderEnd>
  </Header>
);

const Footer = ({ children, plain }) => (
  <GroupFooter>
    <span>{children}</span>
    {plain ? null : (
      <button aria-label={`${children} settings`}><Launcher /></button>
    )}
  </GroupFooter>
);

const More = ({ label }) => (
  <Tool $narrow aria-label={label}><Chevron /></Tool>
);

const RibbonArea = () => (
  <Ribbon>
    <Group $w={137}>
      <GroupBody>
        <PasteButton>
          <PasteIcon />
          Paste
          <Chevron />
        </PasteButton>
        <SmallList>
          <SmallButton><CutIcon />Cut</SmallButton>
          <SmallButton><CopyIcon />Copy</SmallButton>
          <SmallButton><BrushIcon />Format Painter</SmallButton>
        </SmallList>
      </GroupBody>
      <Footer>Clipboard</Footer>
    </Group>

    <Group $w={247}>
      <GroupBody>
        <Rows>
          <ToolRow>
            <SelectBox $w={95}>
              <select aria-label="Font"><option>Calibri (Body)</option></select>
              <DownArrow />
            </SelectBox>
            <SelectBox $w={36}>
              <select aria-label="Font size"><option>12</option></select>
              <DownArrow />
            </SelectBox>
            <Tool aria-label="Grow font"><GrowFont /></Tool>
            <Tool aria-label="Shrink font"><GrowFont down /></Tool>
            <Divider />
            <Tool aria-label="Change case">Aa</Tool>
            <More label="Case options" />
            <Divider />
            <Tool aria-label="Clear formatting"><EraserIcon /></Tool>
          </ToolRow>
          <ToolRow>
            <Tool $on><b>B</b></Tool>
            <Tool><b><i>I</i></b></Tool>
            <Tool><b><u>U</u></b></Tool>
            <More label="Underline styles" />
            <Tool><small><s>abc</s></small></Tool>
            <Tool aria-label="Subscript">
              <Svg w={12} h={12}>
                <path d="m1.500 2 5 7M6.500 2l-5 7" strokeWidth="1.700" />
                <path d="M8.500 8q2-1 2 .5L8.500 11h2.500" stroke="#3873b8" />
              </Svg>
            </Tool>
            <Tool aria-label="Superscript">
              <Svg w={12} h={12}>
                <path d="m1.500 4 5 7M6.500 4l-5 7" strokeWidth="1.700" />
                <path d="M8.500 1.500q2-1 2 .5L8.500 4.500h2.500" stroke="#3873b8" />
              </Svg>
            </Tool>
            <Divider />
            <Tool aria-label="Text effects"><OutlineA /></Tool>
            <More label="Text effect styles" />
            <Tool aria-label="Highlight"><HighlightIcon /></Tool>
            <More label="Highlight colors" />
            <Tool aria-label="Font color"><FontColorIcon /></Tool>
            <More label="Font colors" />
          </ToolRow>
        </Rows>
      </GroupBody>
      <Footer>Font</Footer>
    </Group>

    <Group $w={248}>
      <GroupBody>
        <Rows>
          <ToolRow>
            <Tool aria-label="Bullets"><ListIcon kind="bullet" /></Tool>
            <More label="Bullet styles" />
            <Tool aria-label="Numbering"><ListIcon kind="number" /></Tool>
            <More label="Number styles" />
            <Tool aria-label="Multilevel list"><ListIcon kind="multi" /></Tool>
            <More label="List styles" />
            <Divider />
            <Tool aria-label="Decrease indent"><IndentIcon out /></Tool>
            <Tool aria-label="Increase indent"><IndentIcon /></Tool>
            <Divider />
            <Tool $on aria-label="Left to right"><PilcrowIcon arrow="right" /></Tool>
            <Tool aria-label="Right to left"><PilcrowIcon arrow="left" /></Tool>
            <Divider />
            <Tool aria-label="Sort"><SortIcon /></Tool>
            <Divider />
            <Tool aria-label="Show marks"><PilcrowIcon /></Tool>
          </ToolRow>
          <ToolRow>
            <Tool aria-label="Align left"><AlignIcon kind="left" /></Tool>
            <Tool $on aria-label="Center"><AlignIcon kind="center" /></Tool>
            <Tool aria-label="Align right"><AlignIcon kind="right" /></Tool>
            <Tool aria-label="Justify"><AlignIcon kind="justify" /></Tool>
            <More label="Justify options" />
            <Divider />
            <Tool aria-label="Line spacing"><SpacingIcon /></Tool>
            <More label="Spacing options" />
            <Divider />
            <Tool aria-label="Shading"><ShadingIcon /></Tool>
            <More label="Shading colors" />
            <Tool aria-label="Borders"><BordersIcon /></Tool>
            <More label="Border styles" />
          </ToolRow>
        </Rows>
      </GroupBody>
      <Footer>Paragraph</Footer>
    </Group>

    <Group $w={331}>
      <GroupBody $pad={8}>
        <Gallery>
          {styleCards.map((card) => (
            <StyleCard key={card.name} $on={card.on}>
              <Sample $size={card.size} $color={card.color} $serif={card.serif}>
                {card.sample}
              </Sample>
              {card.name}
            </StyleCard>
          ))}
          <GalleryNav>
            <button aria-label="Previous styles">
              <Svg w={5} h={3} stroke="none"><path d="M0 3h5L2.500 0z" fill="#bbb" /></Svg>
            </button>
            <button aria-label="Next styles"><DownArrow /></button>
            <button aria-label="All styles">
              <Svg w={7} h={7}>
                <path d="M0 .5h7" />
                <path d="M.5 3h6l-3 3.500z" fill="#555" stroke="none" />
              </Svg>
            </button>
          </GalleryNav>
        </Gallery>
      </GroupBody>
      <Footer>Styles</Footer>
    </Group>

    <Group $w={74}>
      <GroupBody $pad={9}>
        <SmallList>
          <SmallButton><FindIcon />Find<Chevron /></SmallButton>
          <SmallButton><ReplaceIcon />Replace</SmallButton>
          <SmallButton><SelectIcon />Select<Chevron /></SmallButton>
        </SmallList>
      </GroupBody>
      <Footer plain>Editing</Footer>
    </Group>

    <Group $w={141}>
      <GroupBody>
        <BigButton>
          <PdfIcon />
          {"Create and Share\nAdobe PDF"}
        </BigButton>
        <BigButton>
          <SignatureIcon />
          {"Request\nSignatures"}
        </BigButton>
      </GroupBody>
      <Footer plain>Adobe Acrobat</Footer>
    </Group>

    <Group $w={52}>
      <GroupBody>
        <BigButton>
          <Svg w={20} h={20} stroke="none">
            <circle cx="10" cy="9" r="4.500" fill="#f7941d" />
          </Svg>
          Add-ins
        </BigButton>
      </GroupBody>
      <Footer plain>Add-ins</Footer>
    </Group>

    <CollapseArea>
      <button aria-label="Collapse ribbon">
        <Svg w={12} h={8}><path d="m1 6.500 5-5 5 5" strokeWidth="1.200" /></Svg>
      </button>
    </CollapseArea>
  </Ribbon>
);

const TopRuler = () => (
  <RulerRow>
    <TabStop aria-label="Tab stop">
      <Svg w={6} h={6}><path d="M1 0v5h5" stroke="#666" strokeWidth="1.800" /></Svg>
    </TabStop>
    <Ruler>
      <ScaleClip>
        <Scale>
          {rulerUnits.map((n) => (
            <Unit key={n}>
              <Tick $long />
              <Tick />
              <span>{n === 0 || n === 5 ? "" : Math.abs(n)}</span>
              <Tick />
            </Unit>
          ))}
        </Scale>
      </ScaleClip>
      <Marker $x={126} />
      <Marker $x={392} />
      <Marker $x={657} />
      <Marker $x={924} />
      <Indent $x={402} $y={-2} width="8" height="19" fill="#fff" stroke="#888">
        <path d="M.5.5h7v2L4 6 .5 2.500zM4 8l3.500 3.500v2h-7v-2zM.5 14.500h7v3h-7z" />
      </Indent>
      <Indent $x={648} $y={6} width="8" height="8" fill="#fff" stroke="#888">
        <path d="m4 .8 3.500 3.500v2.200h-7V4.300z" />
      </Indent>
    </Ruler>
  </RulerRow>
);

const Document = () => (
  <Page>
    <HexTable>
      <colgroup>
        <col width="166" />
        <col width="197" />
        <col width="147" />
      </colgroup>
      <tbody>
        <tr><td /><td /><td /></tr>
        {hexRows.map((row) => (
          <tr key={row[0]}>
            {row.map((cell) => (
              <td key={cell}>{cell}</td>
            ))}
          </tr>
        ))}
      </tbody>
    </HexTable>

    <SectionTitle>Converting from Binary to Hexadecimal</SectionTitle>
    <Line>
      <b>Converting</b> from <b>binary</b> to <b>hexadecimal</b> is a{" "}
      <b>very easy</b>. <b>Starting from the right</b> and moving
    </Line>
    <Line>
      left, <b>split</b> the <b>binary number</b> into <b>groups of 4 bits</b>.
      If the last group has <b>less than 4 bits</b>, then
    </Line>
    <Line $tight>
      simply fill in with <b>0s from the left</b>. Take{" "}
      <b>each group of 4</b> bits and <b>convert</b> it into the equivalent
    </Line>
    <Line $last>
      <b>hexadecimal</b> digit using the table.
    </Line>

    <ExampleTitle>Example</ExampleTitle>
    <BitString>101111100001</BitString>
    <Paragraph $top={15}>
      First split this up into groups of <b>4 bits</b>: <Bits>{"1011   1110   0001"}</Bits>
    </Paragraph>

    <TableFrame>
      <BitTable>
        <tbody>
          {[weights, bits].map((row, r) => (
            <tr key={r}>
              {row.map((cell, i) => (
                <td key={i} className={i % 4 === 3 ? "edge" : undefined}>{cell}</td>
              ))}
            </tr>
          ))}
          <tr>
            <td colSpan={4} className="edge">11 = B</td>
            <td colSpan={4} className="edge"><Picked>14 </Picked>= E</td>
            <td colSpan={4} className="edge">1 = 1</td>
          </tr>
        </tbody>
      </BitTable>
      <MoveHandle width="12" height="12" fill="#fff" stroke="#666">
        <path d="M.5.5h11v11H.5z" stroke="#999" />
        <path d="M6 2v8M2 6h8M5 3l1-1 1 1M5 9l1 1 1-1M3 5 2 6l1 1M9 5l1 1-1 1" fill="none" />
      </MoveHandle>
      <Caret width="6" height="16" fill="none" stroke="#333">
        <path d="M.5.5h2l.5.500.5-.5h2M3 1v14M.5 15.500h2l.5-.5.5.500h2" />
      </Caret>
      <ResizeHandle />
    </TableFrame>

    <Paragraph $top={28}>
      the equivalent hexadecimal digits: <b>BE1</b>
    </Paragraph>
  </Page>
);

const StatusArea = () => (
  <StatusBar>
    <StatusItem>Page 12 of 287</StatusItem>
    <StatusItem>1 of 50460 words</StatusItem>
    <StatusItem aria-label="Proofing"><StatusBook /></StatusItem>
    <StatusItem>English (United Kingdom)</StatusItem>
    <StatusItem><AccessIcon />Accessibility: Investigate</StatusItem>
    <Views>
      <ViewButton aria-label="Read mode"><ReadView /></ViewButton>
      <ViewButton $on aria-label="Print layout"><PrintView /></ViewButton>
      <ViewButton aria-label="Web layout"><WebView /></ViewButton>
    </Views>
    <ZoomStep aria-label="Zoom out">−</ZoomStep>
    <Zoom aria-label="Zoom" type="range" min="0" max="100" defaultValue="58" />
    <ZoomStep aria-label="Zoom in">+</ZoomStep>
    <ZoomValue>160%</ZoomValue>
  </StatusBar>
);

const TaskbarArea = () => (
  <Taskbar>
    <Apps>
      <AppButton $w={40} aria-label="Start"><WindowsLogo /></AppButton>
      <SearchBox>
        <Svg w={13} h={13} stroke="#222" strokeWidth="1.500">
          <circle cx="7.500" cy="5.500" r="4.500" />
          <path d="M4.500 9 1 12.500" />
        </Svg>
        <input aria-label="Search" placeholder="Search" />
        <Skyline />
      </SearchBox>
      {apps.map((app) => (
        <AppButton key={app.name} $active={app.active} aria-label={app.name}>
          {app.icon}
          {(app.active || app.running) && <Running $active={app.active} />}
          {app.badge && <Badge>{app.badge}</Badge>}
        </AppButton>
      ))}
    </Apps>
    <Tray>
      <TrayButton aria-label="Hidden icons">
        <Svg w={12} h={8}><path d="m1 6.500 5-5 5 5" strokeWidth="1.300" /></Svg>
      </TrayButton>
      <TrayButton aria-label="Sync">
        <Svg w={14} h={15}>
          <path d="M1 7a6 6 0 0 1 11-3M12.500 1v3.500H9M1 13.500V10h3.500M1.500 10.500Q3 13 6 13.500" strokeWidth="1.200" />
          <circle cx="10" cy="10.500" r="3.500" fill="#0f6cbd" stroke="none" />
        </Svg>
      </TrayButton>
      <TrayButton $w={26} aria-label="Microphone">
        <Svg w={10} h={15} stroke="#3c66a8" strokeWidth="1.200">
          <rect x="3" y="1" width="4" height="8" rx="2" />
          <path d="M1 6.500q0 4.500 4 4.500t4-4.500M5 11v3" />
        </Svg>
      </TrayButton>
      <TrayButton $w={40}>ENG</TrayButton>
      <TrayButton aria-label="Wi-Fi">
        <Svg w={14} h={11} strokeWidth="1.100">
          <path d="M1 4a8.500 8.500 0 0 1 12 0M3 6.300a5.700 5.700 0 0 1 8 0M5 8.300a2.800 2.800 0 0 1 4 0" />
          <circle cx="7" cy="9.500" r=".8" fill="#222" />
        </Svg>
      </TrayButton>
      <TrayButton aria-label="Volume">
        <Svg w={14} h={12}>
          <path d="M.5 4.500H3L6 1.500v9l-3-3H.5zM8 4q1.500 2 0 4M9.800 2.500q2.800 3.500 0 7M11.500 1q4 5 0 10" />
        </Svg>
      </TrayButton>
      <TrayButton aria-label="Battery">
        <Svg w={15} h={12}>
          <rect x="2.500" y="3.500" width="10" height="6" rx="1" />
          <path d="M4 5h6v3.500H4zM13.500 5.500v2M1 1h5v4.500H1z" fill="#222" />
        </Svg>
      </TrayButton>
      <Clock>
        17:44
        <br />
        11/09/2023
      </Clock>
    </Tray>
  </Taskbar>
);

const App = () => (
  <Window>
    <GlobalStyle />
    <TitleArea />
    <RibbonArea />
    <TopRuler />
    <Workspace>
      <SideRuler>
        <SideScale>
          {sideUnits.map((n) => (
            <SideUnit key={n}>
              <SideTick $long />
              <SideTick />
              <span>{n}</span>
              <SideTick />
            </SideUnit>
          ))}
        </SideScale>
        <RowMark $y={458} />
        <RowMark $y={485} />
      </SideRuler>
      <Document />
      <ScrollBar>
        <ScrollButton aria-label="Scroll up">
          <Svg w={7} h={4} stroke="none"><path d="M0 4h7L3.500 0z" fill="#222" /></Svg>
        </ScrollButton>
        <ScrollThumb />
        <ScrollButton aria-label="Scroll down">
          <Svg w={7} h={4} stroke="none"><path d="M0 0h7L3.500 4z" fill="#222" /></Svg>
        </ScrollButton>
      </ScrollBar>
    </Workspace>
    <StatusArea />
    <TaskbarArea />
  </Window>
);

export default App;
